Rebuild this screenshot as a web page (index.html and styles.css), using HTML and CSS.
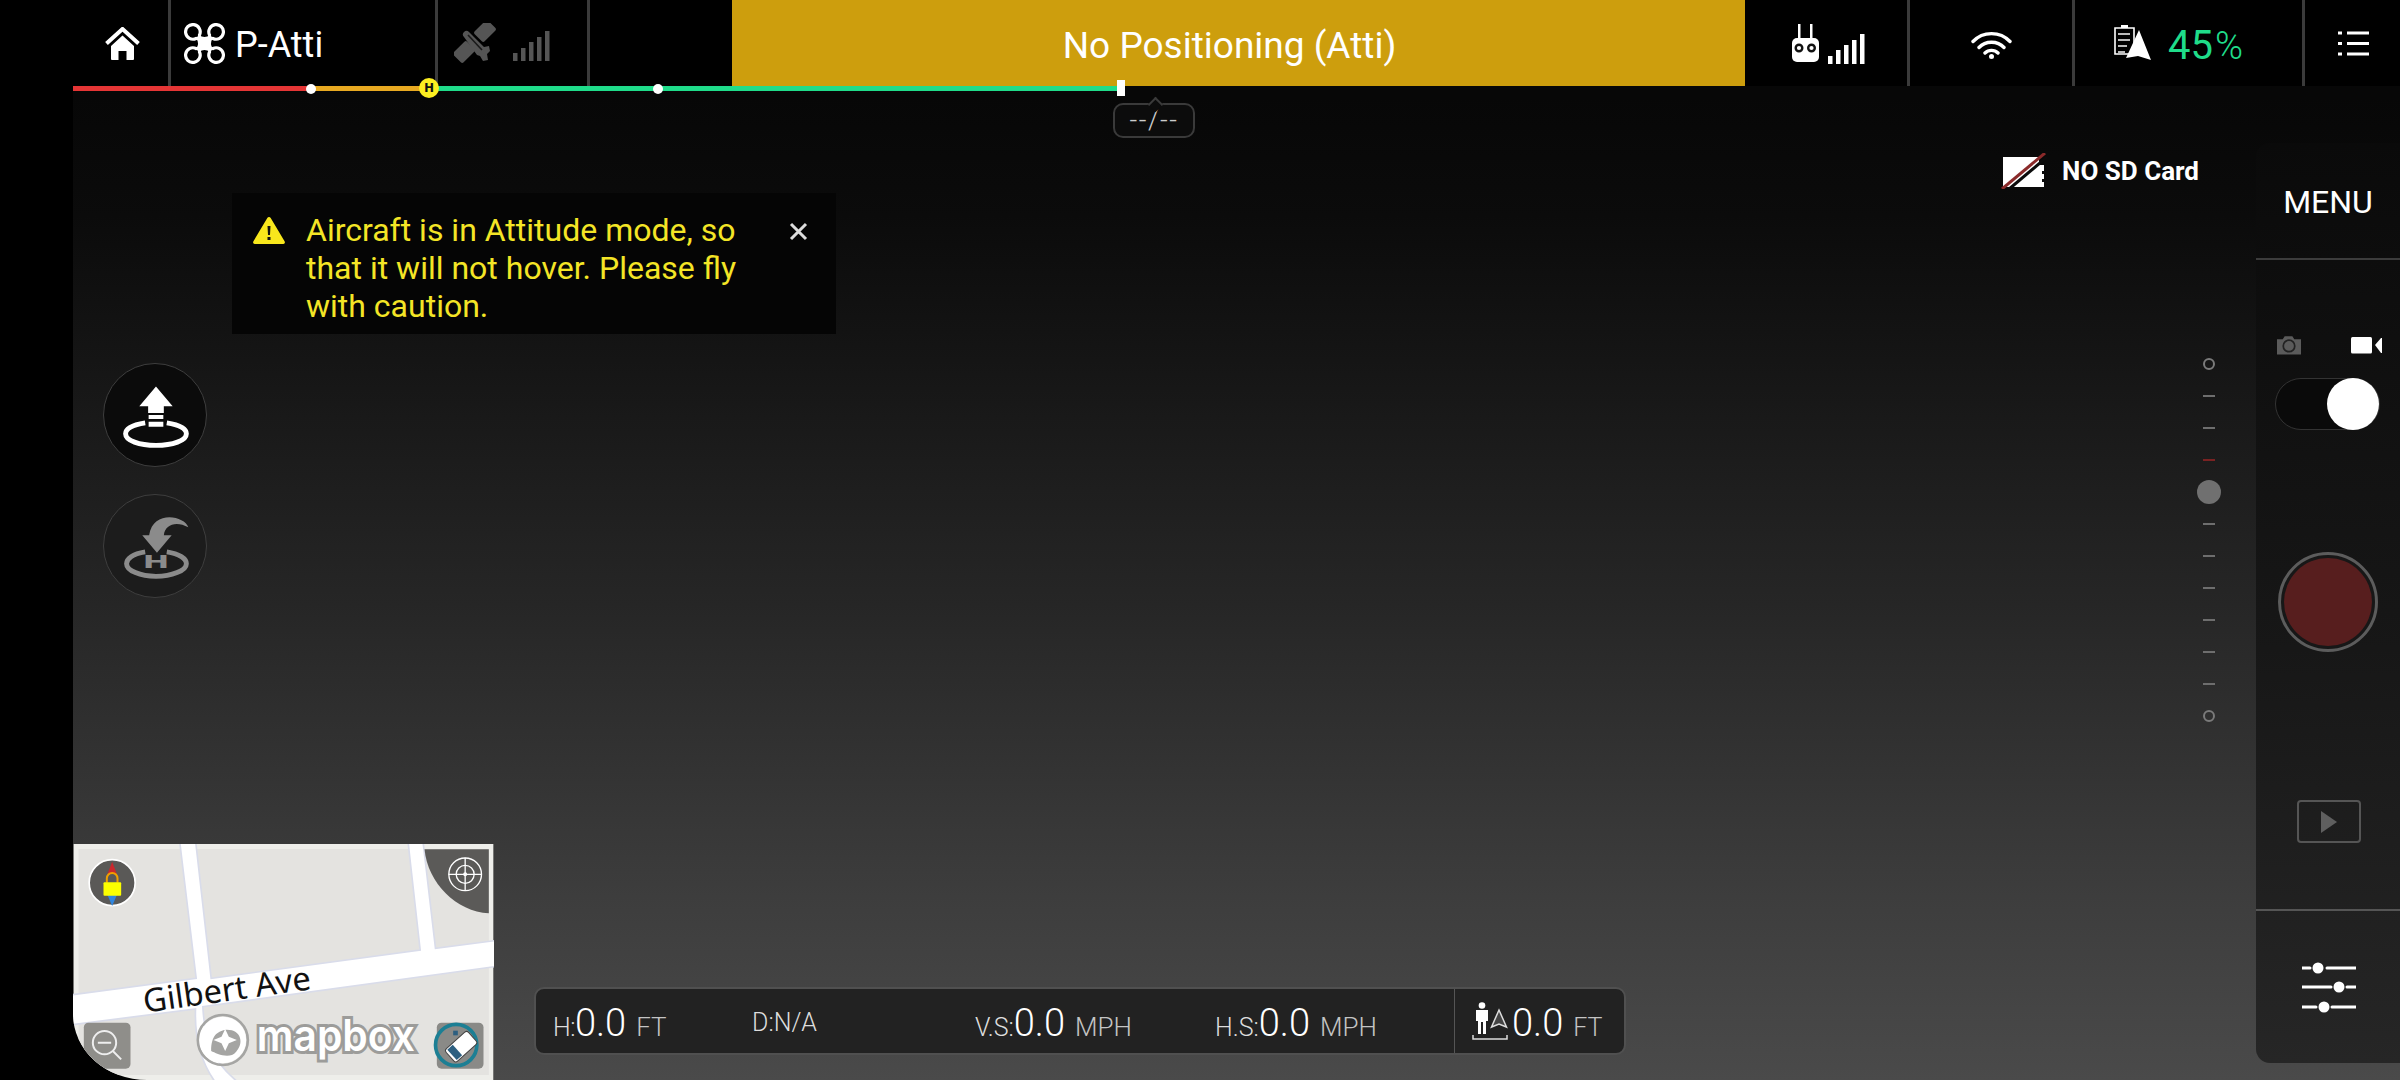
FILE: index.html
```html
<!DOCTYPE html>
<html lang="en">
<head>
<meta charset="utf-8">
<title>DJI flight view</title>
<link rel="stylesheet" href="styles.css">
</head>
<body>
<div class="strip"></div>
<main class="main">
  <header class="topbar">
    <div class="cell cell-home">
      <svg class="ic-home" viewBox="0 0 36 34"><path class="roof" d="M1.5 16.5 17.5 2l16 14.5"/><path class="fill-w" d="M6 19 17.500 8.500 29 19v13a1 1 0 0 1-1 1h-6.500v-9h-8v9H7a1 1 0 0 1-1-1z"/></svg>
    </div>
    <div class="cell cell-mode">
      <svg class="ic-drone" viewBox="0 0 41 41"><path class="fill-w" d="M15 12Q20.500 16 26 12L29 15Q25 20.500 29 26L26 29Q20.500 25 15 29L12 26Q16 20.500 12 15Z"/><path class="drone-arc" d="M12 15.500A7.300 7.300 0 1 1 15.500 12M29 15.500A7.300 7.300 0 1 0 25.500 12M12 25.500A7.300 7.300 0 1 0 15.500 29M29 25.500A7.300 7.300 0 1 1 25.500 29"/></svg>
      <span class="mode-text">P-Atti</span>
    </div>
    <div class="cell cell-sat">
      <svg class="ic-sat" viewBox="0 0 42 40"><g class="fill-g"><rect x="24" y="-1.500" width="14" height="19" rx="2" transform="rotate(45 31 8)"/><rect x="3" y="19.500" width="14" height="19" rx="2" transform="rotate(45 10 29)"/><path d="M10 14a3.500 3.500 0 0 1 5-5l15 15 5-1 1 5-3 3 1 6-5 1-3-5-3-1-13-18z"/></g><path class="sat-line" d="M14 12l14 15"/></svg>
      <svg class="ic-bars" viewBox="0 0 37 30"><g class="fill-g"><rect x="0" y="22" width="4.500" height="8"/><rect x="8" y="17" width="4.500" height="13"/><rect x="16" y="11" width="4.500" height="19"/><rect x="24" y="6" width="4.500" height="24"/><rect x="32" y="0" width="4.500" height="30"/></g></svg>
    </div>
    <div class="cell cell-empty"></div>
    <div class="cell cell-status">No Positioning (Atti)</div>
    <div class="cell cell-rc">
      <svg class="ic-rc" viewBox="0 0 27 38"><path class="fill-w" d="M6 0h2.500v14H6zM18 0h2.500v14H18z"/><path class="fill-w" d="M5 14h17a5 5 0 0 1 5 5v14a5 5 0 0 1-5 5H5a5 5 0 0 1-5-5V19a5 5 0 0 1 5-5z"/><circle class="rc-eye" cx="7" cy="24" r="3.300"/><circle class="rc-eye" cx="19.500" cy="24" r="3.300"/></svg>
      <svg class="ic-bars" viewBox="0 0 37 30"><g class="fill-w"><rect x="0" y="22" width="4.500" height="8"/><rect x="8" y="16" width="4.500" height="14"/><rect x="16" y="11" width="4.500" height="19"/><rect x="24" y="6" width="4.500" height="24"/><rect x="32" y="0" width="4.500" height="30"/></g></svg>
    </div>
    <div class="cell cell-wifi">
      <svg class="ic-wifi" viewBox="0 0 41 28"><path class="wifi-arc" d="M2 10.500C12 0 29 0 39 10.500M8 16.500C14.500 9.500 26.500 9.500 33 16.500M14 22C17.500 18.500 23.500 18.500 27 22"/><circle class="fill-w" cx="20.500" cy="25.500" r="2.500"/></svg>
    </div>
    <div class="cell cell-batt">
      <svg class="ic-batt" viewBox="0 0 40 38"><path class="batt-line" d="M1 4h19v26H1z"/><path class="fill-w" d="M7 1h7v3H7z"/><path class="batt-bars" d="M4 10h12M4 16h12M4 22h9M4 28h7"/><path class="arrow" d="M25 6 12 34 24 32 37 36z"/></svg>
      <span class="pct">45<small>%</small></span>
    </div>
    <div class="cell cell-list">
      <svg class="ic-list" viewBox="0 0 31 25"><path class="list-line" d="M0 2h4M9 2h22M0 12.500h4M9 12.500h22M0 23h4M9 23h22"/></svg>
    </div>
  </header>

  <div class="progress">
    <span class="seg seg-red"></span><span class="seg seg-orange"></span><span class="seg seg-green"></span>
    <i class="dot dot-a"></i><i class="dot dot-b"></i>
    <b class="h-mark">H</b>
    <i class="tick"></i>
    <span class="tag">--/--</span>
  </div>

  <div class="stage">
    <section class="hud">
      <div class="sd-row">
        <svg class="ic-sd" viewBox="0 0 46 36"><path class="fill-w" d="M2 4h36v8h5v6h-2v3h2v5h-2v3h2v5H2z"/><path class="sd-gap" d="M7 37 46 4"/><path class="sd-slash" d="M1 36 44 0"/></svg>
        <span class="sd-text">NO SD Card</span>
      </div>

      <div class="mid-row">
        <div class="left-col">
          <div class="warning">
            <svg class="ic-warn" viewBox="0 0 32 27"><path class="warn-tri" d="M16 0a2 2 0 0 1 1.700 1L31.700 24.500a1.700 1.700 0 0 1-1.500 2.500H1.800a1.700 1.700 0 0 1-1.500-2.500L14.300 1A2 2 0 0 1 16 0z"/><path class="warn-mark" d="M14.500 9h3l-.5 9h-2zM14.500 20h3v3h-3z"/></svg>
            <p class="warn-text">Aircraft is in Attitude mode, so that it will not hover. Please fly with caution.</p>
            <svg class="ic-close" viewBox="0 0 19 19"><path class="close-x" d="M2 2l15 15M17 2 2 17"/></svg>
          </div>
          <button class="round round-up" type="button">
            <svg viewBox="0 0 104 104"><path class="fill-w" d="M53 23 70 43H61V50H45V43H36zM45.500 52H60.500V56H45.500zM45.500 59H60.500V64H45.500z"/><path class="ring-w" d="M42 60C29 62 22 66 22 71 22 78 36 83 53 83S84 78 84 71C84 66 77 62 64 60"/></svg>
          </button>
          <button class="round round-home" type="button">
            <svg viewBox="0 0 104 104"><path class="fill-dim" d="M86 33C82 21 50 15 46 41H39L54 59 69 41H61C62 30 74 26 86 33Z"/><path class="ring-dim" d="M42 58C29 60 23 65 23 70 23 77 37 83 53 83S84 77 84 70C84 65 77 60 64 58"/><text class="h-text" x="53" y="74" text-anchor="middle" textLength="25" lengthAdjust="spacingAndGlyphs">H</text></svg>
          </button>
        </div>
        <div class="zoom-scale">
          <i class="z-ring"></i><i class="z-tick"></i><i class="z-tick"></i><i class="z-tick z-red"></i><i class="z-knob"></i><i class="z-tick"></i><i class="z-tick"></i><i class="z-tick"></i><i class="z-tick"></i><i class="z-tick"></i><i class="z-tick"></i><i class="z-ring"></i>
        </div>
      </div>

      <div class="bottom-row">
        <div class="map-wrap">
          <svg class="map" viewBox="12 42 1260 708">
            <rect class="m-edge" x="12" y="42" width="1260" height="708"/>
            <rect class="m-land" x="27" y="57" width="1231" height="678"/>
            <g class="m-road">
              <path d="M330 30H378L425 445 1052 360 1015 30H1060L1098 355 1290 330V408L400 530C405 620 420 690 510 760H440C395 700 375 620 378 537L0 585V495L380 445Z"/>
            </g>
            <path class="m-dark" d="M1065 58H1258V250C1160 245 1075 160 1065 58Z"/>
            <g class="m-target"><circle cx="1187" cy="133" r="49"/><circle cx="1187" cy="133" r="27"/><path d="M1137 133H1237M1187 83V183"/></g>
            <circle class="m-white-dot" cx="1187" cy="133" r="6"/>
            <circle class="m-comp" cx="128" cy="158" r="69"/>
            <path class="m-red" d="M128 95 142 132H114Z"/>
            <path class="m-blue" d="M128 228 114 195H142Z"/>
            <path class="m-shackle" d="M112 158V145A16 16 0 0 1 144 145V158"/>
            <rect class="m-lock" x="102" y="157" width="53" height="40" rx="3"/>
            <rect class="m-btn" x="43" y="578" width="140" height="138" rx="14"/>
            <g class="m-mag"><circle cx="105" cy="638" r="35"/><path d="M85 638H125M130 663 155 688"/></g>
            <text class="m-street" x="0" y="0" transform="translate(226 548) rotate(-8)">Gilbert Ave</text>
            <circle class="m-logo-out" cx="460" cy="630" r="75"/>
            <circle class="m-logo-in" cx="460" cy="630" r="70"/>
            <path class="m-logo-tail" d="M425 663C425 615 445 605 465 600 515 595 525 640 500 665 480 690 440 670 425 663Z"/>
            <path class="m-logo-star" d="M467 597 478 620 502 630 478 640 467 663 456 640 432 630 456 620Z"/>
            <text class="m-mapbox" x="562" y="664" textLength="474" lengthAdjust="spacingAndGlyphs">mapbox</text>
            <rect class="m-btn2" x="1102" y="578" width="140" height="138" rx="14"/>
            <circle class="m-teal" cx="1160" cy="645" r="62"/>
            <rect class="m-navy" x="1151" y="602" width="14" height="14"/>
            <g transform="rotate(-42 1175 650)"><rect class="m-eraser" x="1130" y="625" width="90" height="50" rx="8"/><path class="m-eraser-a" d="M1138 629H1160V671H1138Z"/></g>
          </svg>
        </div>
        <div class="telemetry">
          <div class="t-group t-h"><span class="t-l">H:</span><span class="t-v">0.0</span><span class="t-u">FT</span></div>
          <div class="t-group t-d"><span class="t-l">D:N/A</span></div>
          <div class="t-group t-vs"><span class="t-l">V.S:</span><span class="t-v">0.0</span><span class="t-u">MPH</span></div>
          <div class="t-group t-hs"><span class="t-l">H.S:</span><span class="t-v">0.0</span><span class="t-u">MPH</span></div>
          <div class="t-group t-home">
            <svg class="ic-person" viewBox="0 0 36 38"><circle class="fill-w" cx="10" cy="3.500" r="3.300"/><path class="fill-w" d="M4 8h12v11h-2v13h-3V20H9v12H6V19H4z"/><path class="p-a" d="M19.500 25 27 8 34.500 25 27 22z"/><path class="p-line" d="M1 33v4h34v-4"/></svg>
            <span class="t-v">0.0</span><span class="t-u">FT</span>
          </div>
        </div>
      </div>
    </section>

    <aside class="panel">
      <div class="p-menu">MENU</div>
      <div class="p-mid">
        <div class="mode-icons">
          <svg class="ic-cam" viewBox="0 0 25 20"><path class="fill-cam" d="M0 4h6l2-3h8l2 3h7v16H0z"/><circle class="cam-lens" cx="12.500" cy="11" r="6"/></svg>
          <svg class="ic-video" viewBox="0 0 31 17"><rect class="fill-w" x="0" y="0" width="21" height="16.500" rx="1.500"/><path class="fill-w" d="M24 8 30 1h1v15h-1z"/></svg>
        </div>
        <div class="toggle"><span class="toggle-knob"></span></div>
        <div class="record"><span class="record-in"></span></div>
        <div class="playback"><svg viewBox="0 0 16 22"><path class="fill-play" d="M0 0 16 11 0 22z"/></svg></div>
      </div>
      <div class="p-settings">
        <svg class="ic-sliders" viewBox="0 0 54 52"><path class="slide-l" d="M0 7h8M25 7h29M0 26h29M45 26h9M0 46h14M30 46h24"/><circle class="fill-w" cx="16" cy="7" r="5.500"/><circle class="fill-w" cx="37" cy="26" r="5.500"/><circle class="fill-w" cx="22" cy="46" r="5.500"/></svg>
      </div>
    </aside>
  </div>
</main>
</body>
</html>
```
FILE: styles.css
```css
* { box-sizing: border-box; }
html, body { margin: 0; height: 100%; }
body {
  width: 2400px; height: 1080px; display: flex; overflow: hidden;
  background: #000; color: #fff;
  font-family: Roboto, "Liberation Sans", sans-serif;
}
svg { display: block; }
.strip { width: 73px; flex: none; background: #000; }
.main {
  flex: 1; display: flex; flex-direction: column; min-width: 0;
  background: linear-gradient(180deg, #070707 9%, #0b0b0b 20%, #262626 56%, #3d3d3d 83%, #4a4a4a 100%);
}
.fill-w { fill: #fff; }
.fill-g { fill: #555; }

/* top bar */
.topbar { height: 86px; flex: none; display: flex; background: #000; }
.cell { flex: none; display: flex; align-items: center; border-right: 3px solid #3b3b3b; }
.cell-home { width: 98px; padding: 1px 0 0 32px; }
.cell-mode { width: 267px; padding-left: 13px; gap: 10px; }
.cell-sat { width: 152px; padding-left: 16px; gap: 17px; }
.cell-empty { width: 142px; border-right: 0; }
.cell-status {
  width: 1013px; border-right: 0; background: #cd9e0d; justify-content: center;
  font-size: 37px; padding: 4px 18px 0 0; line-height: 1;
}
.cell-rc { width: 165px; padding: 0 0 0 47px; gap: 9px; }
.cell-wifi { width: 165px; justify-content: center; }
.cell-batt { width: 230px; padding-left: 39px; gap: 14px; }
.cell-list { width: 95px; border-right: 0; padding-left: 33px; }
.ic-home { width: 36px; height: 34px; }
.roof { fill: none; stroke: #fff; stroke-width: 4; }
.ic-drone { width: 41px; height: 41px; flex: none; }
.drone-arc { fill: none; stroke: #fff; stroke-width: 3.200; stroke-linecap: round; }
.mode-text { font-size: 36px; font-weight: 400; line-height: 1; margin-top: 4px; }
.ic-sat { width: 42px; height: 40px; flex: none; }
.sat-line { fill: none; stroke: #1a1a1a; stroke-width: 1.6; }
.ic-bars { width: 37px; height: 30px; flex: none; margin-top: 5px; }
.cell-rc .ic-bars { margin-top: 12px; }
.ic-rc { width: 27px; height: 38px; flex: none; margin-top: 0; }
.rc-eye { fill: #fff; stroke: #111; stroke-width: 2.4; }
.ic-wifi { width: 41px; height: 28px; margin-top: 3px; }
.wifi-arc { fill: none; stroke: #fff; stroke-width: 3.400; stroke-linecap: round; }
.ic-batt { width: 40px; height: 38px; flex: none; }
.batt-line { fill: #000; stroke: #fff; stroke-width: 1.600; }
.batt-bars { fill: none; stroke: #bbb; stroke-width: 1.800; }
.arrow { fill: #fff; stroke: #000; stroke-width: 0; }
.pct { font-size: 40px; font-weight: 400; color: #1fdc8a; line-height: 1; margin-top: 6px; }
.pct small { font-size: 38px; font-weight: 300; margin-left: 2px; }
.ic-list { width: 31px; height: 25px; }
.list-line { fill: none; stroke: #fff; stroke-width: 3; }

/* flight-limit bar */
.progress { height: 5px; flex: none; display: flex; position: relative; }
.seg { display: block; height: 5px; flex: none; }
.seg-red { width: 238px; background: #e53535; }
.seg-orange { width: 118px; background: #e8a921; }
.seg-green { width: 691px; background: #1fdc8a; }
.dot { position: absolute; width: 10px; height: 10px; border-radius: 50%; background: #fff; top: -2.500px; }
.dot-a { left: 233px; }
.dot-b { left: 580px; }
.h-mark {
  position: absolute; left: 346px; top: -8px; width: 20px; height: 20px; border-radius: 50%;
  background: #fcee21; color: #111; font-size: 13px; font-weight: 900; line-height: 20px; text-align: center;
}
.tick { position: absolute; left: 1044px; top: -6px; width: 8px; height: 16px; background: #fff; }
.tag {
  position: absolute; left: 1040px; top: 17px; width: 82px; height: 35px;
  border: 2px solid #3a3a3a; border-radius: 10px; background: #0c0c0c;
  color: #ccc; font-size: 27px; font-weight: 300; line-height: 31px; text-align: center; letter-spacing: 1.500px;
}
.tag::before {
  content: ""; position: absolute; left: 35px; top: -6px; width: 9px; height: 9px;
  background: #0c0c0c; border: 2px solid #3a3a3a; border-right: 0; border-bottom: 0;
  transform: rotate(45deg);
}

/* stage */
.stage { flex: 1; display: flex; min-height: 0; }
.hud { flex: 1; display: flex; flex-direction: column; min-width: 0; padding-top: 64px; }
.sd-row { display: flex; align-items: center; justify-content: flex-end; height: 32px; padding-right: 57px; gap: 15px; }
.ic-sd { width: 46px; height: 36px; flex: none; }
.sd-slash { stroke: #8a2a2a; stroke-width: 3; }
.sd-gap { stroke: #0b0b0b; stroke-width: 3; }
.sd-text { font-size: 26px; font-weight: 700; line-height: 1; }
.mid-row { display: flex; justify-content: space-between; padding-right: 35px; }
.left-col { display: flex; flex-direction: column; align-items: flex-start; padding-top: 6px; }
.warning {
  width: 604px; height: 141px; margin-left: 159px; background: #050505;
  display: flex; align-items: flex-start; padding: 24px 0 0 21px;
}
.ic-warn { width: 32px; height: 27px; flex: none; margin-top: 0; }
.warn-tri { fill: #f8e71c; }
.warn-mark { fill: #111; }
.warn-text {
  margin: -6px 0 0 21px; width: 440px; color: #f4e526;
  font-size: 32px; line-height: 38px;
}
.ic-close { width: 19px; height: 19px; flex: none; margin: 5px 0 0 43px; }
.close-x { stroke: #ddd; stroke-width: 3; fill: none; }
.round {
  width: 104px; height: 104px; margin: 29px 0 0 30px; padding: 0; border-radius: 50%;
  border: 1px solid #3e3e3e; background: #0b0b0b;
}
.round-home { margin-top: 27px; background: #1c1c1c; }
.round svg { width: 102px; height: 102px; }
.ring-w { fill: none; stroke: #fff; stroke-width: 5; }
.fill-dim { fill: #8b8b8b; }
.ring-dim { fill: none; stroke: #8b8b8b; stroke-width: 5; }
.h-text { fill: #8b8b8b; font-size: 18px; font-weight: 900; font-family: Roboto, sans-serif; }
.zoom-scale {
  width: 24px; margin-top: 161px; display: grid; grid-auto-rows: 32px;
  align-items: center; justify-items: center;
}
.z-ring { width: 12px; height: 12px; border: 2px solid #7a7a7a; border-radius: 50%; }
.z-tick { width: 12px; height: 2px; background: #6e6e6e; }
.z-red { background: #7a2222; }
.z-knob { width: 24px; height: 24px; border-radius: 50%; background: #707070; }
.bottom-row { margin-top: auto; display: flex; align-items: flex-end; }
.map-wrap { width: 421px; height: 236px; flex: none; background: #000; }
.map { width: 421px; height: 236px; border-bottom-left-radius: 74px 66px; overflow: hidden; }
.m-edge { fill: #eeeeea; }
.m-land { fill: #e4e3e0; }
.m-road path { fill: #fff; stroke: #d9dcea; stroke-width: 5; }
.m-dark { fill: #5b5a58; }
.m-target circle, .m-target path { fill: none; stroke: #fff; stroke-width: 4; }
.m-white-dot { fill: #fff; }
.m-comp { fill: #5a5957; stroke: #fff; stroke-width: 5; }
.m-red { fill: #c9282d; }
.m-blue { fill: #2f86e0; }
.m-shackle { fill: none; stroke: #f0a000; stroke-width: 6; }
.m-lock { fill: #fbff00; }
.m-btn { fill: #8f8e8a; }
.m-mag circle, .m-mag path { fill: none; stroke: #eee; stroke-width: 6; }
.m-street { font-family: "Noto Sans", Inter, sans-serif; font-size: 98px; fill: #111; }
.m-logo-out { fill: none; stroke: #a5a5a3; stroke-width: 8; }
.m-logo-in { fill: #fff; }
.m-logo-tail { fill: #a5a5a3; }
.m-logo-star { fill: #fff; }
.m-mapbox {
  font-family: Inter, Roboto, sans-serif; font-weight: 600; font-size: 130px; fill: #fff;
  stroke: #9c9c9a; stroke-width: 18; paint-order: stroke;
}
.m-btn2 { fill: #8a8a87; }
.m-teal { fill: none; stroke: #1c7f94; stroke-width: 11; }
.m-navy { fill: #2d5f80; }
.m-eraser { fill: #fff; stroke: #444; stroke-width: 3; }
.m-eraser-a { fill: #2d5f80; }
.telemetry {
  width: 1092px; height: 68px; margin: 0 0 25px 40px; flex: none;
  border: 2px solid #505050; border-radius: 10px; background: #222;
  display: flex; align-items: stretch;
}
.t-group { display: flex; align-items: baseline; flex: none; padding-top: 12px; font-weight: 300; white-space: nowrap; }
.t-h { width: 216px; padding-left: 17px; }
.t-d { width: 223px; }
.t-vs { width: 240px; }
.t-hs { width: 239px; }
.t-home { width: 172px; padding: 14px 0 0 17px; border-left: 1px solid #555; }
.t-home .t-v, .t-home .t-u { position: relative; top: -2px; }
.t-l { font-size: 25px; color: #ddd; line-height: 44px; }
.t-h .t-l { letter-spacing: -0.5px; }
.t-v { font-size: 38px; color: #fff; line-height: 44px; }
.t-u { font-size: 26px; color: #c4c4c4; line-height: 44px; margin-left: 10px; }
.t-home .t-u { font-size: 25px; }
.ic-person { width: 36px; height: 38px; flex: none; align-self: flex-start; margin: -1px 4px 0 0; }
.p-a { fill: #444; stroke: #ddd; stroke-width: 1.500; }
.p-line { fill: none; stroke: #ddd; stroke-width: 1.500; }

/* right panel */
.panel {
  width: 144px; flex: none; margin: 52px 0 17px; border-radius: 14px 0 0 14px;
  background: linear-gradient(180deg, #0a0a0a, #171717 55%, #262626);
  display: flex; flex-direction: column;
}
.p-menu {
  height: 117px; flex: none; display: flex; align-items: center; justify-content: center;
  font-size: 32px; padding-top: 2px; border-bottom: 2px solid #3c3c3c;
}
.p-mid { flex: 1; display: flex; flex-direction: column; align-items: flex-start; padding: 75px 0 0 19px; }
.mode-icons { width: 105px; display: flex; justify-content: space-between; align-items: center; margin-left: 2px; height: 20px; }
.ic-cam { width: 24px; height: 20px; }
.fill-cam { fill: #5b5b5b; }
.cam-lens { fill: none; stroke: #222; stroke-width: 1.800; }
.ic-video { width: 31px; height: 17px; }
.toggle {
  width: 105px; height: 52px; margin-top: 23px; border: 1px solid #333; border-radius: 26px;
  position: relative; background: #0a0a0a;
}
.toggle-knob { position: absolute; right: 0; top: -1px; width: 52px; height: 52px; border-radius: 50%; background: #fff; }
.record {
  width: 100px; height: 100px; margin: 122px 0 0 3px; border-radius: 50%;
  border: 3px solid #5c5c5c; display: flex; align-items: center; justify-content: center; background: #171717;
}
.record-in { width: 88px; height: 88px; border-radius: 50%; background: #571e1e; }
.playback {
  width: 64px; height: 43px; margin: 148px 0 0 22px; border: 2px solid #555; border-radius: 4px;
  display: flex; align-items: center; justify-content: center;
}
.playback svg { width: 16px; height: 22px; }
.fill-play { fill: #5f5f5f; }
.p-settings { height: 154px; flex: none; border-top: 2px solid #555; display: flex; align-items: center; justify-content: center; }
.ic-sliders { width: 54px; height: 52px; margin-left: 1px; }
.slide-l { fill: none; stroke: #fff; stroke-width: 3; stroke-linecap: round; }
```
